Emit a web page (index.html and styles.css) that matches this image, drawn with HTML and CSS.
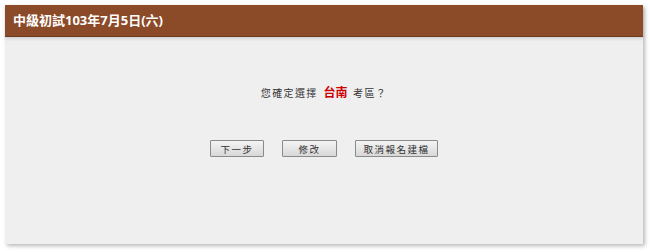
FILE: index.html
```html
<!DOCTYPE html>
<html lang="zh-Hant">
<head>
    <meta charset="UTF-8">
    <title>報名確認</title>
    <link rel="stylesheet" href="styles.css">
</head>
<body>

<div class="panel">
    <div class="panel-title">中級初試103年7月5日(六)</div>
    <div class="panel-body">
        <p class="question">您確定選擇 <span class="area">台南</span> 考區？</p>
        <div class="actions">
            <button class="btn btn-next">下一步</button>
            <button class="btn btn-edit">修改</button>
            <button class="btn btn-cancel">取消報名建檔</button>
        </div>
    </div>
</div>

</body>
</html>
```

FILE: styles.css
```css
* {
    margin: 0;
    padding: 0;
    box-sizing: border-box;
}

body {
    background: #ffffff;
    font-family: "Noto Sans CJK TC", "DejaVu Sans", sans-serif;
    padding: 5px 7px 8px 5px;
}

.panel {
    background: #efefef;
    height: 239px;
    box-shadow: 2px 2px 4px rgba(0, 0, 0, 0.28);
}

.panel-title {
    background: #8b4b29;
    color: #ffffff;
    font-family: "Open Sans", "Noto Sans CJK TC", sans-serif;
    font-weight: bold;
    font-size: 13px;
    height: 32px;
    line-height: 31px;
    padding-left: 8px;
    border-bottom: 1px solid #6e3a1f;
    box-shadow: 0 2px 3px rgba(0, 0, 0, 0.12);
}

.panel-body {
    display: flex;
    flex-direction: column;
    align-items: center;
}

.question {
    margin-top: 46px;
    font-size: 10px;
    color: #333333;
    letter-spacing: 1.4px;
    line-height: 18px;
}

.area {
    color: #cc0000;
    font-weight: bold;
    font-size: 12px;
    letter-spacing: 0;
    margin: 0 2px;
}

.actions {
    display: flex;
    gap: 18px;
    margin-top: 38px;
}

.btn {
    height: 17px;
    font-family: "Noto Sans CJK TC", sans-serif;
    font-size: 9.5px;
    letter-spacing: 1.5px;
    white-space: nowrap;
    color: #333333;
    border: 1px solid #8a8a8a;
    border-radius: 1px;
    background: linear-gradient(#f4f4f4, #d8d8d8);
}

.btn-next { width: 54px; }
.btn-edit { width: 55px; }
.btn-cancel { width: 83px; }
```
